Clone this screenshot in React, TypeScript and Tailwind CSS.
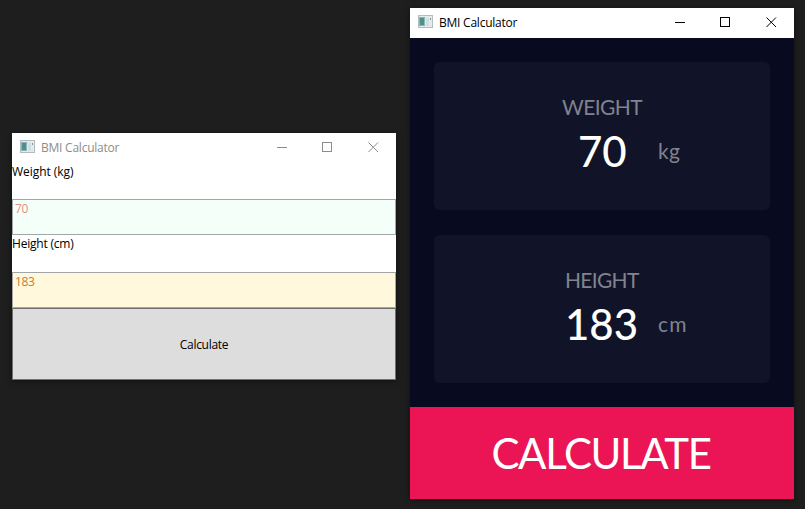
import React from "react";

const UI = "font-['Open_Sans','Noto_Sans',sans-serif] text-[12px] leading-[16px] whitespace-nowrap";
const CAL = "font-['Lato','Open_Sans',sans-serif] whitespace-nowrap";

function AppIcon() {
  return (
    <svg width="16" height="14" viewBox="0 0 16 14" className="block shrink-0" shapeRendering="crispEdges">
      <rect x="0" y="0" width="15" height="13" fill="#b4bcc2" />
      <rect x="1" y="1" width="13" height="11" fill="#e3eaec" />
      <rect x="1" y="2" width="6" height="9" fill="#8fb3b8" />
      <rect x="2" y="3" width="4" height="7" fill="#4c9288" />
      <rect x="8" y="3" width="3" height="8" fill="#d0dfe2" />
      <rect x="12" y="3" width="1" height="2" fill="#8795a3" />
    </svg>
  );
}

function TitleBar({ active }: { active: boolean }) {
  const tone = active ? "text-black" : "text-[#8c8c8c]";
  return (
    <header className={`flex h-[30px] shrink-0 items-start bg-white pl-2 ${tone}`}>
      <div className="mt-[7px]">
        <AppIcon />
      </div>
      <span className={`${UI} ml-[5px] mt-[7px] tracking-[-0.23px]`}>BMI Calculator</span>
      <svg width="102" height="12" viewBox="0 0 102 12" className="ml-auto mr-[17px] mt-[8px] block" fill="none" stroke="currentColor">
        <path d="M0 6.5H10" />
        <rect x="45.5" y="1.5" width="9" height="9" />
        <path d="M91.5 1.5L101 11M101 1.5L91.5 11" />
      </svg>
    </header>
  );
}

function FormField({ label, value, labelStyle, tone }: { label: string; value: string; labelStyle: string; tone: string }) {
  return (
    <label className="block">
      <span className={`${UI} block pt-px text-black ${labelStyle}`}>{label}</span>
      <input
        defaultValue={value}
        className={`${UI} block h-[36px] w-full border border-[#a3a6a6] px-[2px] pb-[18px] tracking-[-0.3px] outline-none ${tone}`}
      />
    </label>
  );
}

interface CardProps {
  title: string;
  value: string;
  unit: string;
  titleStyle: string;
  valueStyle: string;
  unitStyle: string;
}

function MetricCard({ title, value, unit, titleStyle, valueStyle, unitStyle }: CardProps) {
  return (
    <section className="h-[148px] rounded-md bg-[#111428] pt-[31px]">
      <h2 className={`${CAL} h-[28px] text-[21px] leading-[28px] text-[#81838e] ${titleStyle}`}>{title}</h2>
      <div className="flex h-[60px] items-center">
        <span className={`${CAL} shrink-0 text-[42px] font-medium leading-[60px] text-white ${valueStyle}`}>{value}</span>
        <span className={`${CAL} text-[21px] leading-[60px] text-[#81838e] ${unitStyle}`}>{unit}</span>
      </div>
    </section>
  );
}

export default function App() {
  return (
    <main className="flex h-[509px] w-[805px] items-start overflow-hidden bg-[#1e1e1e]">
      <div className="ml-3 mt-[133px] flex h-[247px] w-[384px] flex-col bg-white shadow-[0_1px_5px_rgba(0,0,0,0.5)]">
        <TitleBar active={false} />
        <FormField label="Weight (kg)" value="70" labelStyle="h-[36px] tracking-[-0.05px]" tone="bg-[#f5fffa] text-[#e0907c]" />
        <FormField label="Height (cm)" value="183" labelStyle="h-[37px] tracking-[-0.2px]" tone="bg-[#fff8dc] text-[#c97a3a]" />
        <button className={`${UI} h-[72px] w-full border border-[#707070] bg-[#dddddd] pt-px tracking-[-0.3px] text-black`}>Calculate</button>
      </div>
      <div className="ml-[14px] mt-2 flex h-[491px] w-[384px] flex-col bg-[#080a20] shadow-[0_1px_6px_rgba(0,0,0,0.5)]">
        <TitleBar active />
        <div className="flex h-[369px] flex-col gap-[25px] px-6 pt-6">
          <MetricCard title="WEIGHT" value="70" unit="kg" titleStyle="pl-[128px] tracking-[-0.6px]" valueStyle="pl-[144px] w-[224px]" unitStyle="tracking-[0.3px]" />
          <MetricCard title="HEIGHT" value="183" unit="cm" titleStyle="pl-[131px] tracking-[-0.7px]" valueStyle="pl-[131px] w-[224px]" unitStyle="tracking-[1.2px]" />
        </div>
        <button className={`${CAL} h-[92px] w-full bg-[#eb1555] pr-[2px] text-[42px] leading-[50px] tracking-[-1.4px] text-white`}>CALCULATE</button>
      </div>
    </main>
  );
}
